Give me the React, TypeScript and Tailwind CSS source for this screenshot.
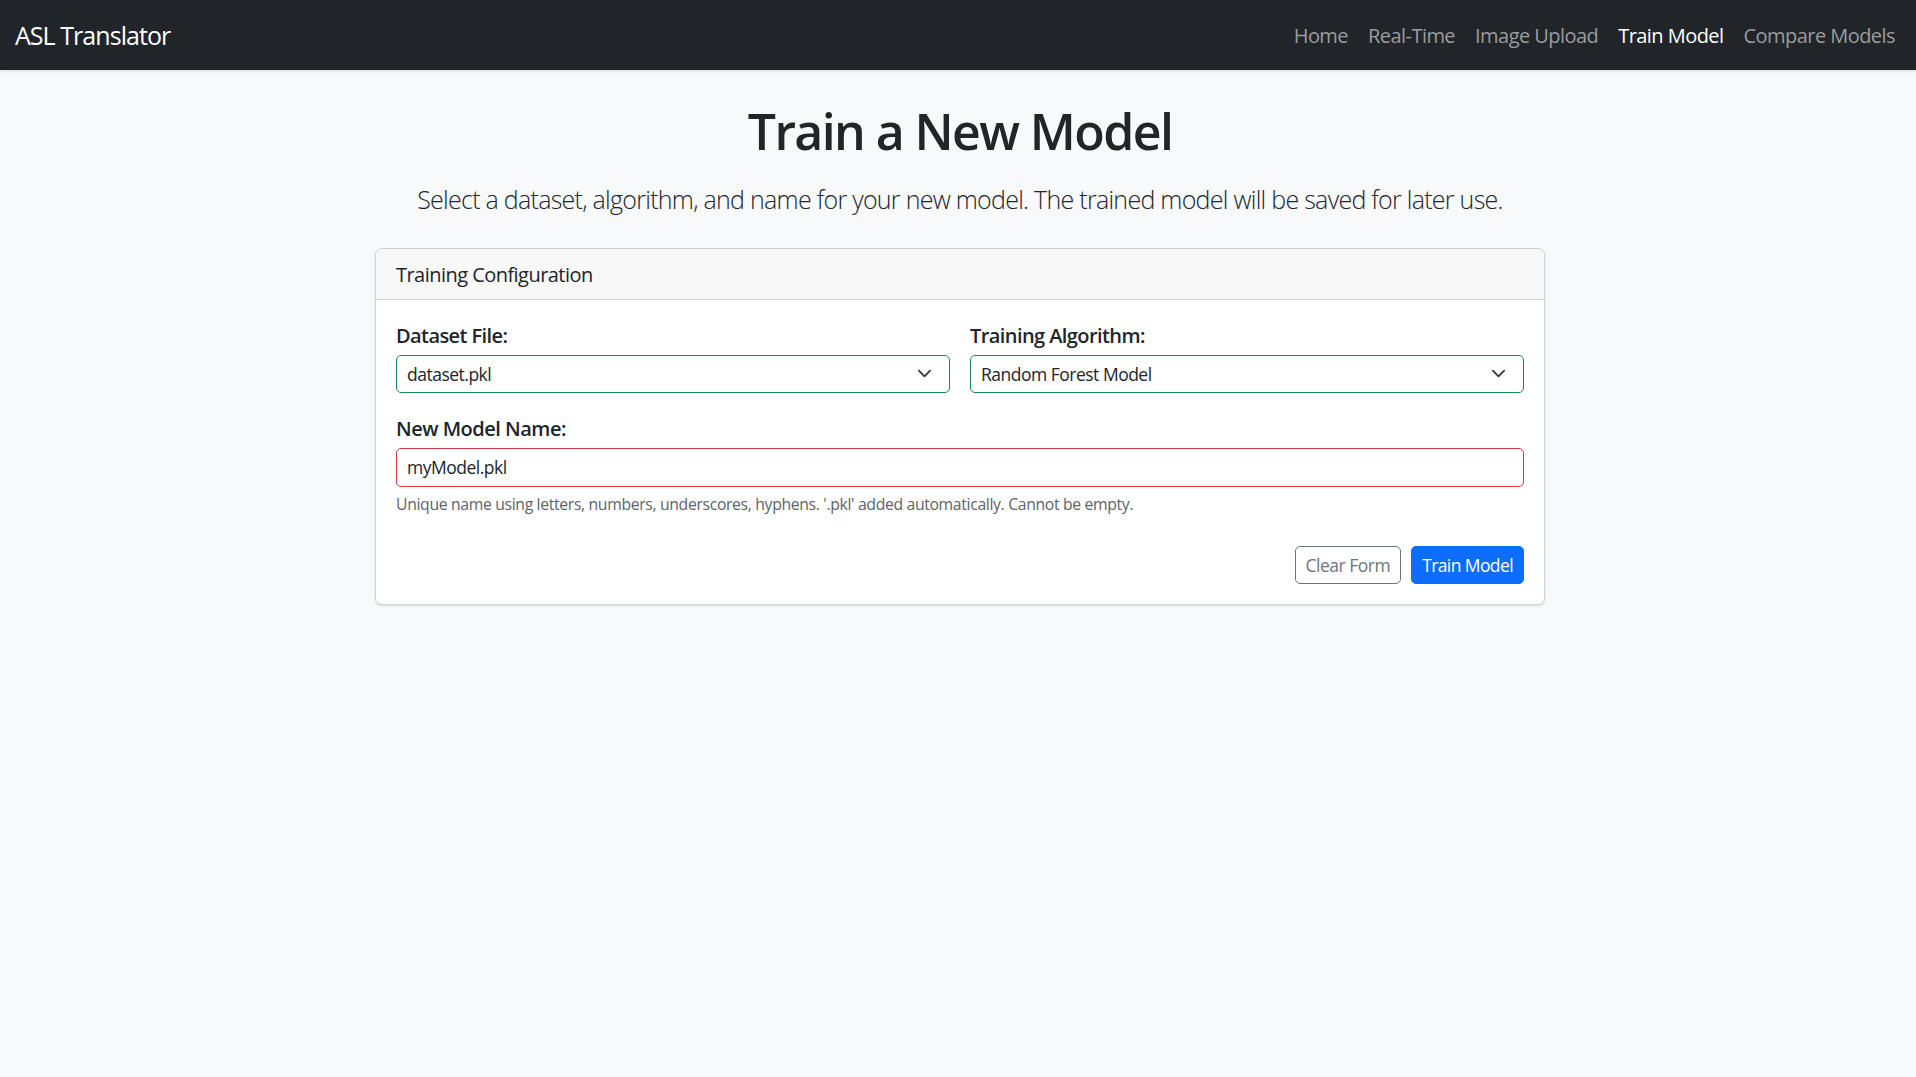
const font = "font-['Open_Sans',sans-serif]";

const navLinks = [
  { label: 'Home', active: false },
  { label: 'Real-Time', active: false },
  { label: 'Image Upload', active: false },
  { label: 'Train Model', active: true },
  { label: 'Compare Models', active: false },
];

const Chevron = () => (
  <svg viewBox="0 0 16 16" className="absolute right-[18px] top-[11px] h-[15px] w-[15px] pointer-events-none" fill="none">
    <path d="m2 5 6 6 6-6" stroke="#343a40" strokeWidth="2" strokeLinecap="round" strokeLinejoin="round" />
  </svg>
);

const SelectField = ({ label, value }: { label: string; value: string }) => (
  <div className="flex-1">
    <label className="block mb-[4px] text-[20px] leading-[30px] font-semibold tracking-[-0.58px] text-[#212529]">{label}</label>
    <div className="relative">
      <select
        defaultValue={value}
        className="block w-full h-[38px] appearance-none rounded-[5px] border border-[#198754] bg-white pl-[10px] text-[17.5px] tracking-[-0.5px] text-[#212529]"
      >
        <option>{value}</option>
      </select>
      <Chevron />
    </div>
  </div>
);

export default function App() {
  return (
    <div className={`w-[1920px] h-[1077px] overflow-hidden bg-[#f8f9fa] text-[#212529] ${font}`}>
      {/* Navbar */}
      <nav className="flex items-center justify-between h-[70px] px-[15px] bg-[#212529] shadow-sm">
        <a className="text-[25px] tracking-[-0.95px] text-white pt-[1px]">ASL Translator</a>
        <ul className="flex pt-[1px]">
          {navLinks.map((l) => (
            <li key={l.label}>
              <a className={`block px-[10px] text-[20px] tracking-[-0.55px] ${l.active ? 'text-white' : 'text-[#9a9c9e]'}`}>
                {l.label}
              </a>
            </li>
          ))}
        </ul>
      </nav>

      <main className="w-[1170px] mx-auto pt-[31px]">
        <h1 className="text-center text-[50px] leading-[60px] font-semibold tracking-[-1.6px]">Train a New Model</h1>
        <p className="mt-[20px] text-center text-[25px] leading-[37px] font-light tracking-[-0.73px]">
          Select a dataset, algorithm, and name for your new model. The trained model will be saved for later use.
        </p>

        {/* Card */}
        <div className="mt-[30px] bg-white rounded-[7px] border border-[#d0d1d2] shadow-sm">
          <div className="h-[51px] flex items-center px-[20px] pt-[2px] bg-[#f8f8f8] border-b border-[#d0d1d2] rounded-t-[7px] text-[20px] tracking-[-0.54px]">
            Training Configuration
          </div>
          <form className="px-[20px] pt-[21px] pb-[20px]">
            <div className="flex gap-[20px]">
              <SelectField label="Dataset File:" value="dataset.pkl" />
              <SelectField label="Training Algorithm:" value="Random Forest Model" />
            </div>
            <label className="block mt-[21px] mb-[4px] text-[20px] leading-[30px] font-semibold tracking-[-0.5px]">New Model Name:</label>
            <input
              defaultValue="myModel.pkl"
              className="block w-full h-[39px] rounded-[5px] border border-[#dc3545] bg-white px-[10px] pb-[2px] text-[17.5px] tracking-[-0.5px] text-[#212529]"
            />
            <p className="mt-[5px] text-[15.75px] leading-[24px] tracking-[-0.34px] text-[#5c636a]">
              Unique name using letters, numbers, underscores, hyphens. '.pkl' added automatically. Cannot be empty.
            </p>
            <div className="flex justify-end gap-[10px] mt-[30px]">
              <button type="button" className="h-[38px] px-[10px] rounded-[5px] border border-[#6c757d] bg-white text-[17.5px] tracking-[-0.5px] text-[#6c757d]">
                Clear Form
              </button>
              <button type="button" className="h-[38px] px-[10px] rounded-[5px] border border-[#0d6efd] bg-[#0d6efd] text-[17.5px] tracking-[-0.6px] text-white">
                Train Model
              </button>
            </div>
          </form>
        </div>
      </main>
    </div>
  );
}
